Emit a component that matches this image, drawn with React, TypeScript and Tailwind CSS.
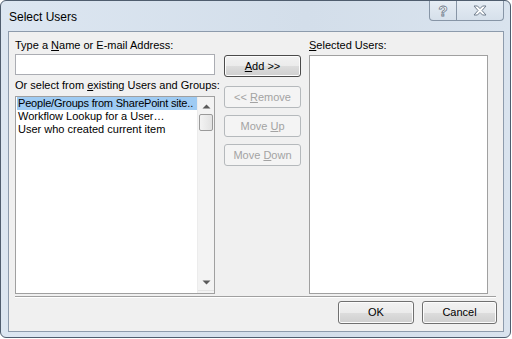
import React from 'react';

const FONT = "font-['Liberation_Sans',Arial,sans-serif]";

type BtnProps = {
  children: React.ReactNode;
  disabled?: boolean;
  isDefault?: boolean;
  className?: string;
};

// Win7 style push button
const Button: React.FC<BtnProps> = ({ children, disabled, isDefault, className = '' }) => {
  const base = 'flex items-center justify-center h-[22px] rounded-[3px] text-[11px] leading-none';
  if (disabled) {
    return (
      <div className={`${base} border border-[#b5b9bc] bg-[#f4f4f4] text-[#a3a3a3] ${className}`}>
        {children}
      </div>
    );
  }
  return (
    <div
      className={`${base} border ${isDefault ? 'border-[#4a4a4a]' : 'border-[#707070]'} bg-[linear-gradient(#f2f2f2,#ebebeb_50%,#dddddd_50%,#cfcfcf)] shadow-[inset_0_0_0_1px_#fcfcfc] text-black ${className}`}
    >
      {children}
    </div>
  );
};

const Triangle: React.FC<{ down?: boolean }> = ({ down }) => (
  <svg width="9" height="5" viewBox="0 0 9 5">
    {down ? (
      <path d="M0.5 0.5 H8.5 L4.5 4.5 Z" fill="#5a5a5a" />
    ) : (
      <path d="M0.5 4.5 H8.5 L4.5 0.5 Z" fill="#5a5a5a" />
    )}
  </svg>
);

const CloseGlyph: React.FC = () => (
  <svg width="14" height="11" viewBox="0 0 14 11">
    <path
      d="M1 1 H4.5 L7 3.6 L9.5 1 H13 L9 5.5 L13 10 H9.5 L7 7.4 L4.5 10 H1 L5 5.5 Z"
      fill="#ffffff"
      stroke="#6f7c8c"
      strokeWidth="1"
      strokeLinejoin="round"
    />
  </svg>
);

const App: React.FC = () => {
  const options: string[] = [
    'People/Groups from SharePoint site..',
    'Workflow Lookup for a User…',
    'User who created current item',
  ];

  return (
    <div className={`w-[512px] h-[339px] bg-white ${FONT}`}>
      <div className="w-[511px] h-[338px] border border-[#4f5d6e] rounded-[6px] bg-[linear-gradient(90deg,#dce6f1,#d3deea_60%,#d9e3ee)] overflow-hidden">
        {/* Title bar */}
        <div className="h-[30px] flex justify-between pr-[6px]">
          <div className="pl-[8px] pt-[9px] text-[12px] leading-[15px] text-black">Select Users</div>
          <div className="flex h-[21px] -mt-px">
            <div className="w-[28px] flex items-center justify-center border border-t-0 border-[#8795a6] rounded-bl-[4px] bg-[linear-gradient(#e6edf5,#d6e0eb)]">
              <span className="text-[15px] font-bold leading-none text-white [-webkit-text-stroke:0.8px_#6f7c8c]">?</span>
            </div>
            <div className="w-[47px] flex items-center justify-center border border-t-0 border-l-0 border-[#8795a6] rounded-br-[4px] bg-[linear-gradient(#e6edf5,#d6e0eb)]">
              <CloseGlyph />
            </div>
          </div>
        </div>

        {/* Client area */}
        <div className="ml-[7px] w-[496px] h-[301px] border border-[#8d9bac] bg-[#f0f0f0] flex flex-col">
          <div className="flex pl-[6px] pt-[7px]">
            {/* Left column */}
            <div className="w-[200px] flex flex-col">
              <div className="h-[13px] text-[11px] leading-[13px] text-black">
                Type a <span className="underline">N</span>ame or E-mail Address:
              </div>
              <div className="mt-[2px] h-[21px] border border-[#abadb3] bg-white" />
              <div className="mt-[4px] h-[13px] text-[11px] leading-[13px] text-black whitespace-nowrap">
                Or select from <span className="underline">e</span>xisting Users and Groups:
              </div>
              <div className="mt-[4px] h-[198px] border border-[#a0a0a0] bg-white flex">
                <div className="flex-1 pl-px min-w-0">
                  {options.map((opt, i) => (
                    <div
                      key={opt}
                      className={`h-[13px] pl-px text-[11px] leading-[13px] whitespace-nowrap text-black ${i === 0 ? 'bg-[#9ecbf3] tracking-[-0.2px]' : ''}`}
                    >
                      {opt}
                    </div>
                  ))}
                </div>
                {/* Scrollbar */}
                <div className="w-[17px] flex flex-col bg-[#f3f3f3] border-l border-[#ececec]">
                  <div className="h-[17px] flex items-center justify-center pt-[2px]">
                    <Triangle />
                  </div>
                  <div className="mx-px h-[17px] rounded-[2px] border border-[#9a9a9a] bg-[linear-gradient(90deg,#f3f3f3,#e2e2e2)]" />
                  <div className="flex-1" />
                  <div className="h-[17px] flex items-center justify-center border-b border-[#e3e3e3] mb-[2px]">
                    <Triangle down />
                  </div>
                </div>
              </div>
            </div>

            {/* Middle column */}
            <div className="ml-[9px] w-[77px] pt-[16px] flex flex-col">
              <Button isDefault>
                <span>
                  <span className="underline">A</span>dd &gt;&gt;
                </span>
              </Button>
              <Button disabled className="mt-[9px]">
                <span>
                  &lt;&lt; <span className="underline">R</span>emove
                </span>
              </Button>
              <Button disabled className="mt-[7px]">
                <span>
                  Move <span className="underline">U</span>p
                </span>
              </Button>
              <Button disabled className="mt-[7px]">
                <span>
                  Move <span className="underline">D</span>own
                </span>
              </Button>
            </div>

            {/* Right column */}
            <div className="ml-[8px] w-[179px] flex flex-col">
              <div className="h-[13px] text-[11px] leading-[13px] text-black">
                <span className="underline">S</span>elected Users:
              </div>
              <div className="mt-[3px] h-[239px] border border-[#a0a0a0] bg-white" />
            </div>
          </div>

          {/* Separator */}
          <div className="ml-[6px] w-[481px] mt-[2px] h-[2px] border-t border-[#a0a0a0] border-b border-b-white" />

          {/* Footer */}
          <div className="flex justify-end gap-[8px] pr-[6px] mt-[3px]">
            <Button className="w-[76px] h-[23px]">OK</Button>
            <Button className="w-[75px] h-[23px]">Cancel</Button>
          </div>
        </div>
      </div>
    </div>
  );
};

export default App;
